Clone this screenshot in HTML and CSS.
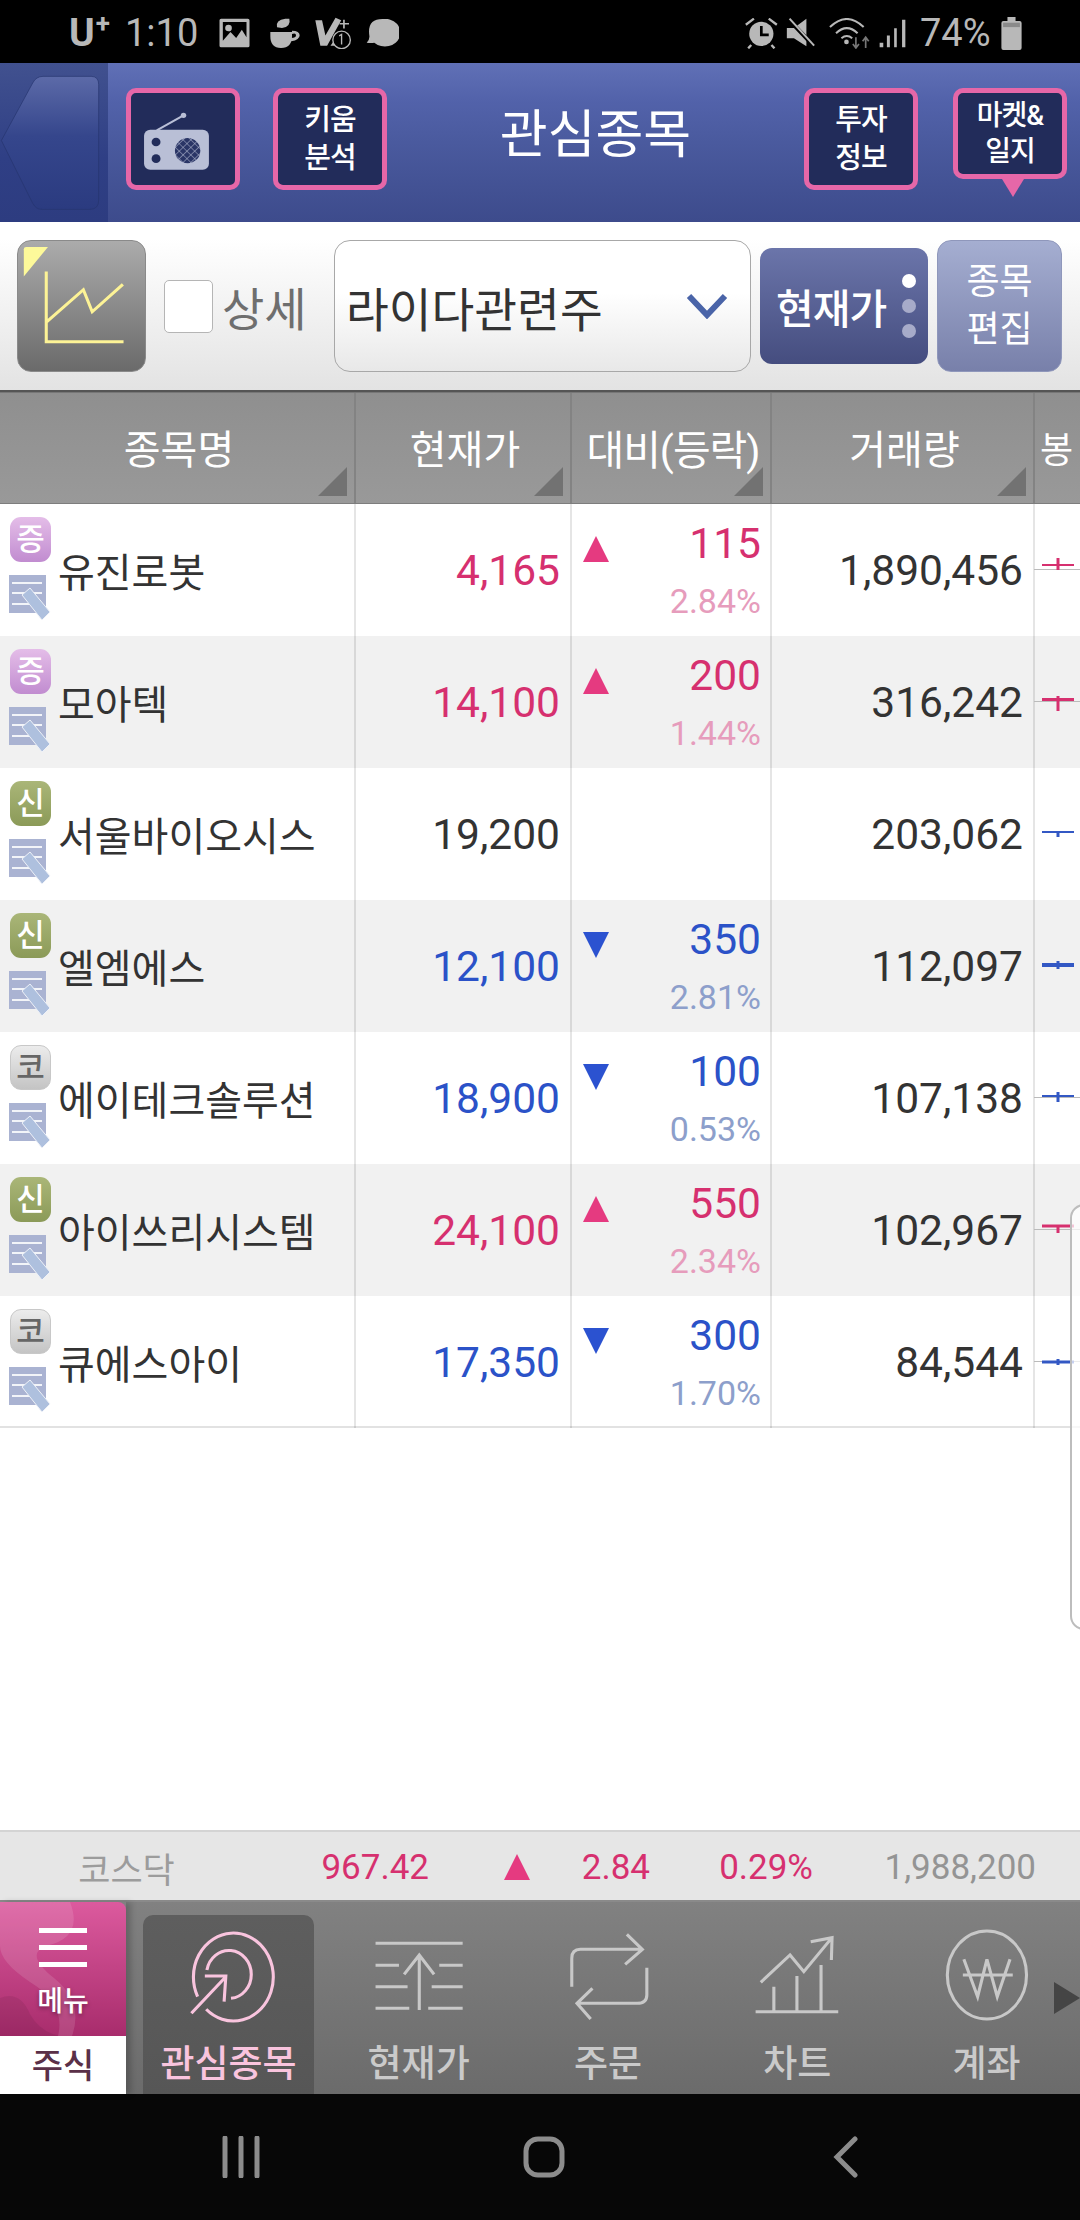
FILE: index.html
```html
<!DOCTYPE html>
<html lang="ko">
<head>
  <meta charset="UTF-8" />
  <meta name="viewport" content="width=device-width, initial-scale=1.0"/>
  <title>관심종목</title>
  <link rel="stylesheet" href="styles.css">
</head>
<body>
<svg class="defs"><symbol id="memo" viewBox="0 0 42 48"><rect width="37" height="38" fill="#aab3d2"/><path d="M3 8H33M3 18H33M3 29H33" stroke="#fff" stroke-width="2" stroke-opacity=".85"/><path d="M13 20L21 13 41 37 33 45Z" fill="#aec0de" stroke="#eef1f8"/></symbol></svg>
<div class="screen">

  <!-- status bar -->
  <div class="status">
    <div class="status-left">
      <span class="carrier">U<sup>+</sup></span>
      <span class="clock">1:10</span>
      <svg class="st-img" viewBox="635 50 90 90"><path fill="#b8b8b8" fill-rule="evenodd" d="M640 52H720Q725 52 725 57V133Q725 138 720 138H640Q635 138 635 133V57Q635 52 640 52ZM645 62V118L668 92 685 110 702 85 716 108V62ZM662 70A10 10 0 1 0 662.1 90 10 10 0 1 0 662 70Z"/></svg>
      <svg class="st-cup" viewBox="785 50 88 90"><path fill="#b8b8b8" d="M785 92H850V105Q850 140 817 140 785 140 785 105ZM805 78Q800 55 830 52L842 52Q848 75 820 80ZM850 88Q873 88 873 102T848 120V110Q862 110 862 102T850 98Z"/></svg>
      <svg class="st-lte" viewBox="915 50 108 95"><path fill="#b8b8b8" d="M915 60H935L945 105 975 52 992 60 950 135H930ZM985 100L960 135H985Z"/><path stroke="#b8b8b8" stroke-width="5" fill="none" d="M1000 58V84M987 70H1015"/><circle cx="993" cy="118" r="26" fill="#000" stroke="#b8b8b8" stroke-width="4"/><path stroke="#b8b8b8" stroke-width="4" fill="none" d="M986 106L993 102V132"/></svg>
      <svg class="st-chat" viewBox="1062 50 96 85"><path fill="#b8b8b8" d="M1110 50A47 42 0 1 1 1085 122Q1075 124 1062 122 1072 112 1070 100 1063 50 1110 50Z"/></svg>
    </div>
    <div class="status-right">
      <svg class="st-alarm" viewBox="595 48 95 92"><circle cx="642" cy="95" r="36" fill="#b8b8b8"/><path d="M642 72V98H664" stroke="#000" stroke-width="8" fill="none"/><path d="M596 68L620 50M688 68L664 50M612 128L603 138M672 128L681 138" stroke="#b8b8b8" stroke-width="7" fill="none"/></svg>
      <svg class="st-mute" viewBox="715 48 85 92"><path fill="#b8b8b8" d="M717 78H738L775 50V132L738 108H717Z"/><path d="M722 52L798 132" stroke="#000" stroke-width="12"/><path d="M725 50L798 130" stroke="#b8b8b8" stroke-width="6"/></svg>
      <svg class="st-wifi" viewBox="838 45 120 92"><path d="M840 72Q890 24 940 72M858 90Q890 60 922 90M874 105Q890 92 906 105" stroke="#b8b8b8" stroke-width="6" fill="none"/><circle cx="889" cy="116" r="7" fill="#b8b8b8"/><path d="M917 102V130M908 122L917 134 926 122M946 134V104M937 114L946 102 955 114" stroke="#777" stroke-width="5" fill="none"/></svg>
      <svg class="st-signal" viewBox="985 50 78 88"><path fill="#b8b8b8" d="M985 122H996V136H985ZM1007 100H1016V136H1007ZM1029 78H1037V136H1029ZM1053 52H1063V136H1053Z"/></svg>
      <span class="battery-text">74%</span>
      <svg class="st-batt" viewBox="1340 46 60 98"><path fill="#b8b8b8" d="M1358 46H1382V58H1394Q1400 58 1400 64V138Q1400 144 1394 144H1346Q1340 144 1340 138V64Q1340 58 1346 58H1358Z"/><path fill="#8a8a8a" d="M1345 63H1395V76H1345Z"/></svg>
    </div>
  </div>

  <!-- title bar -->
  <header class="appbar">
    <div class="back">
      <svg viewBox="0 190 314 476" preserveAspectRatio="none">
        <defs><linearGradient id="backFill" x1="0" y1="0" x2="0" y2="1"><stop offset="0" stop-color="#5c6aa8"/><stop offset=".45" stop-color="#35468c"/><stop offset="1" stop-color="#2b3b80"/></linearGradient></defs>
        <path fill="url(#backFill)" stroke="#25346e" stroke-width="2" d="M4 422L95 250Q105 230 125 230H265Q287 230 287 255V600Q287 628 262 628H120Q105 628 95 610Z"/>
      </svg>
    </div>
    <button class="head-btn radio-btn">
      <svg viewBox="380 280 303 276" preserveAspectRatio="none">
        <defs><pattern id="mesh" width="16" height="16" patternUnits="userSpaceOnUse" patternTransform="rotate(45)"><rect width="16" height="16" fill="#2a3566"/><path d="M0 0H16M0 0V16" stroke="#b9bfd6" stroke-width="3"/></pattern></defs>
        <path d="M455 392L533 347" stroke="#b9bfd6" stroke-width="6"/><circle cx="533" cy="347" r="8" fill="#b9bfd6"/>
        <rect x="418" y="390" width="189" height="120" rx="18" fill="#b9bfd6"/>
        <circle cx="453" cy="427" r="13" fill="#222c5a"/><circle cx="453" cy="477" r="13" fill="#222c5a"/>
        <ellipse cx="545" cy="453" rx="37" ry="38" fill="url(#mesh)"/>
      </svg>
    </button>
    <button class="head-btn kiwoom">키움<br>분석</button>
    <h1 class="title">관심종목</h1>
    <button class="head-btn invest">투자<br>정보</button>
    <button class="head-btn market">마켓&amp;<br>일지</button>
  </header>

  <!-- toolbar -->
  <div class="toolbar">
    <button class="chart-btn">
      <svg viewBox="50 720 373 395" preserveAspectRatio="none">
        <path fill="#fdf99a" d="M67 745Q67 738 74 738H138L67 828Z"/>
        <path d="M133 813V1026H360M135 965L242 868 268 935 358 852" stroke="#fdf396" stroke-width="9" fill="none"/>
      </svg>
    </button>
    <label class="detail"><span class="check"></span>상세</label>
    <div class="select">
      <span>라이다관련주</span>
      <svg class="chevron" viewBox="0 0 42 26"><path d="M3 3L21 22 39 3" stroke="#4a64a8" stroke-width="6" fill="none"/></svg>
    </div>
    <button class="price-btn">
      <span>현재가</span>
      <span class="dots"><i class="on"></i><i></i><i></i></span>
    </button>
    <button class="edit-btn">종목<br>편집</button>
  </div>

  <!-- watch list -->
  <div class="table">
    <div class="thead">
      <div class="th">종목명</div>
      <div class="th">현재가</div>
      <div class="th th-tight">대비(등락)</div>
      <div class="th">거래량</div>
      <div class="th th-last">봉</div>
    </div>

    <div class="row">
      <div class="cell name">
        <div class="marks">
          <span class="badge b-purple">증</span>
          <svg class="memo"><use href="#memo"/></svg>
        </div>
        <span>유진로봇</span>
      </div>
      <div class="cell price up">4,165</div>
      <div class="cell change">
        <i class="tri tri-up"></i>
        <div class="nums up"><span class="amt">115</span><span class="pct">2.84%</span></div>
      </div>
      <div class="cell vol">1,890,456</div>
      <div class="cell spark"><svg viewBox="0 0 46 132"><path d="M0 65.5H46" stroke="#bbb"/><path d="M8 61H40" stroke="#d6306f" stroke-width="2"/><path d="M24 54V66" stroke="#d6306f" stroke-width="3"/></svg></div>
    </div>

    <div class="row">
      <div class="cell name">
        <div class="marks">
          <span class="badge b-purple">증</span>
          <svg class="memo"><use href="#memo"/></svg>
        </div>
        <span>모아텍</span>
      </div>
      <div class="cell price up">14,100</div>
      <div class="cell change">
        <i class="tri tri-up"></i>
        <div class="nums up"><span class="amt">200</span><span class="pct">1.44%</span></div>
      </div>
      <div class="cell vol">316,242</div>
      <div class="cell spark"><svg viewBox="0 0 46 132"><path d="M0 65.5H46" stroke="#bbb"/><path d="M8 63.5H40" stroke="#d6306f" stroke-width="3"/><path d="M24 60V75" stroke="#d6306f" stroke-width="3"/></svg></div>
    </div>

    <div class="row">
      <div class="cell name">
        <div class="marks">
          <span class="badge b-green">신</span>
          <svg class="memo"><use href="#memo"/></svg>
        </div>
        <span>서울바이오시스</span>
      </div>
      <div class="cell price">19,200</div>
      <div class="cell change"></div>
      <div class="cell vol">203,062</div>
      <div class="cell spark"><svg viewBox="0 0 46 132"><path d="M8 64H40" stroke="#3358c4" stroke-width="2"/><path d="M24 64V69" stroke="#3358c4" stroke-width="3"/></svg></div>
    </div>

    <div class="row">
      <div class="cell name">
        <div class="marks">
          <span class="badge b-green">신</span>
          <svg class="memo"><use href="#memo"/></svg>
        </div>
        <span>엘엠에스</span>
      </div>
      <div class="cell price down">12,100</div>
      <div class="cell change">
        <i class="tri tri-down"></i>
        <div class="nums down"><span class="amt">350</span><span class="pct">2.81%</span></div>
      </div>
      <div class="cell vol">112,097</div>
      <div class="cell spark"><svg viewBox="0 0 46 132"><path d="M8 65H40" stroke="#3358c4" stroke-width="4"/><path d="M24 61V69" stroke="#3358c4" stroke-width="3"/></svg></div>
    </div>

    <div class="row">
      <div class="cell name">
        <div class="marks">
          <span class="badge b-grey">코</span>
          <svg class="memo"><use href="#memo"/></svg>
        </div>
        <span>에이테크솔루션</span>
      </div>
      <div class="cell price down">18,900</div>
      <div class="cell change">
        <i class="tri tri-down"></i>
        <div class="nums down"><span class="amt">100</span><span class="pct">0.53%</span></div>
      </div>
      <div class="cell vol">107,138</div>
      <div class="cell spark"><svg viewBox="0 0 46 132"><path d="M0 65.5H46" stroke="#bbb"/><path d="M8 64H40" stroke="#3358c4" stroke-width="2"/><path d="M24 60V70" stroke="#3358c4" stroke-width="3"/></svg></div>
    </div>

    <div class="row">
      <div class="cell name">
        <div class="marks">
          <span class="badge b-green">신</span>
          <svg class="memo"><use href="#memo"/></svg>
        </div>
        <span>아이쓰리시스템</span>
      </div>
      <div class="cell price up">24,100</div>
      <div class="cell change">
        <i class="tri tri-up"></i>
        <div class="nums up"><span class="amt">550</span><span class="pct">2.34%</span></div>
      </div>
      <div class="cell vol">102,967</div>
      <div class="cell spark"><svg viewBox="0 0 46 132"><path d="M0 65.5H46" stroke="#bbb"/><path d="M8 62H40" stroke="#d6306f" stroke-width="3"/><path d="M24 61V69" stroke="#d6306f" stroke-width="3"/></svg></div>
    </div>

    <div class="row">
      <div class="cell name">
        <div class="marks">
          <span class="badge b-grey">코</span>
          <svg class="memo"><use href="#memo"/></svg>
        </div>
        <span>큐에스아이</span>
      </div>
      <div class="cell price down">17,350</div>
      <div class="cell change">
        <i class="tri tri-down"></i>
        <div class="nums down"><span class="amt">300</span><span class="pct">1.70%</span></div>
      </div>
      <div class="cell vol">84,544</div>
      <div class="cell spark"><svg viewBox="0 0 46 132"><path d="M0 65.5H46" stroke="#bbb"/><path d="M8 66H40" stroke="#3358c4" stroke-width="3"/><path d="M24 63V69" stroke="#3358c4" stroke-width="3"/></svg></div>
    </div>

    <aside class="side-panel"></aside>
  </div>

  <!-- index ticker -->
  <div class="ticker">
    <span class="t-name">코스닥</span>
    <span class="t-num">967.42</span>
    <i class="tri tri-up t-tri"></i>
    <span class="t-num">2.84</span>
    <span class="t-num">0.29%</span>
    <span class="t-vol">1,988,200</span>
  </div>

  <!-- bottom menu -->
  <nav class="tabs">
    <div class="menu">
      <div class="menu-top">
        <svg class="menu-deco" viewBox="0 0 126 134" preserveAspectRatio="none"><path fill="#fff" fill-opacity=".12" d="M0 0H70Q84 36 46 44 24 52 54 76 84 100 72 134H58Q66 102 30 80 0 60 0 44Z"/><path fill="#000" fill-opacity=".07" d="M0 96Q20 88 30 112 40 130 60 134H0Z"/></svg>
        <span class="burger"><i></i><i></i><i></i></span>
        <span class="menu-label">메뉴</span>
      </div>
      <div class="menu-bottom">주식</div>
    </div>
    <div class="tab on">
      <svg viewBox="521 315 290.4 300" preserveAspectRatio="none"><path d="M600 568A116 132 0 1 0 575 530M602 450A65 72 0 1 1 672 535M557 580L657 470M596 468H657L652 545"/></svg>
      <span>관심종목</span>
    </div>
    <div class="tab">
      <svg viewBox="1068 315 290.4 300" preserveAspectRatio="none"><path d="M1087 370H1340M1087 436H1155M1272 436H1340M1087 500H1180M1250 500H1340M1087 565H1185M1240 565H1340M1214 570V405M1170 463L1214 405 1257 463"/></svg>
      <span>현재가</span>
    </div>
    <div class="tab">
      <svg viewBox="50 315 290.4 300" preserveAspectRatio="none"><path d="M90 500V415Q90 388 115 388H295M250 343L295 388 245 433M308 443V525Q308 550 280 550H105M150 505L105 550 145 597"/></svg>
      <span>주문</span>
    </div>
    <div class="tab">
      <svg viewBox="600 315 290.4 300" preserveAspectRatio="none"><path d="M625 575H865M678 500V575M745 468V575M815 435V575M640 487L725 405 765 455 845 355M785 365L847 353 845 420"/></svg>
      <span>차트</span>
    </div>
    <div class="tab">
      <svg viewBox="1150 315 290.4 300" preserveAspectRatio="none"><ellipse cx="1295" cy="465" rx="115" ry="132"/><path d="M1228 418L1268 530 1295 418 1325 530 1362 418M1225 465H1370"/></svg>
      <span>계좌</span>
    </div>
    <i class="tabs-more"></i>
  </nav>

  <!-- android nav -->
  <div class="sysnav">
    <svg class="nav-recent" viewBox="0 0 38 42"><path d="M3 2V40M19 2V40M35 2V40" stroke="#8c8c8c" stroke-width="5" stroke-linecap="round"/></svg>
    <svg class="nav-home" viewBox="0 0 42 42"><rect x="3" y="3" width="36" height="36" rx="12" stroke="#8c8c8c" stroke-width="5" fill="none"/></svg>
    <svg class="nav-back" viewBox="0 0 26 42"><path d="M22 3L4 21 22 39" stroke="#8c8c8c" stroke-width="5" stroke-linecap="round" fill="none"/></svg>
  </div>
</div>
</body>
</html>
```

FILE: styles.css
```css
* { box-sizing: border-box; }
html, body { margin: 0; padding: 0; }
body { font-family: Roboto, "Noto Sans CJK KR", sans-serif; color: #333; background: #fff; }
button { font-family: inherit; padding: 0; margin: 0; border: none; cursor: pointer; }
svg { display: block; }
.defs { display: none; }
.screen { width: 1080px; height: 2220px; display: flex; flex-direction: column; overflow: hidden; }

/* status bar */
.status { height: 63px; flex: none; background: #000; color: #b8b8b8; display: flex; justify-content: space-between; align-items: center; padding: 3px 58px 0 69px; font-size: 38px; }
.status-left, .status-right { display: flex; align-items: center; }
.carrier { font-weight: 700; font-size: 39px; width: 56px; line-height: 1; }
.carrier sup { font-size: 26px; line-height: 0; vertical-align: 14px; margin-left: 1px; }
.clock { width: 94px; line-height: 1; }
.st-img { width: 31px; height: 30px; }
.st-cup { width: 30px; height: 30px; margin-left: 20px; }
.st-lte { width: 37px; height: 32px; margin-left: 15px; }
.st-chat { width: 33px; height: 28px; margin-left: 14px; }
.st-alarm { width: 33px; height: 31px; }
.st-mute { width: 29px; height: 31px; margin-left: 8px; }
.st-wifi { width: 41px; height: 31px; margin-left: 14px; }
.st-signal { width: 27px; height: 29px; margin-left: 9px; }
.battery-text { margin-left: 14px; width: 81px; line-height: 1; }
.st-batt { width: 21px; height: 33px; }

/* title bar */
.appbar { height: 159px; flex: none; display: flex; align-items: flex-start; background: linear-gradient(#6070b6 0%, #5262aa 24%, #4a5a9e 50%, #3d4b8c 100%); }
.back { width: 108px; height: 159px; flex: none; background: linear-gradient(#41518f, #2f3f85 60%, #2d3c80); }
.back svg { width: 108px; height: 159px; }
.head-btn { width: 114px; height: 102px; margin-top: 25px; background: #222c5a; border: 5px solid #e667a8; border-radius: 10px; color: #fff; font-size: 29px; font-weight: 500; line-height: 38px; letter-spacing: -1px; flex: none; }
.radio-btn { margin-left: 18px; }
.radio-btn svg { width: 100%; height: 100%; }
.kiwoom { margin-left: 33px; }
.title { flex: 1; margin: 40px 0 0; text-align: center; color: #fff; font-weight: 400; font-size: 52px; line-height: 66px; }
.market { position: relative; height: 91px; margin-left: 35px; margin-right: 13px; line-height: 36px; font-size: 28px; }
.market::after { content: ""; position: absolute; left: 44px; top: 86px; width: 0; height: 0; border: 11px solid transparent; border-top: 18px solid #e667a8; border-bottom: 0; }

/* toolbar */
.toolbar { height: 170px; flex: none; display: flex; align-items: center; padding: 0 19px 0 17px; background: linear-gradient(#fff 10%, #e3e3e3 100%); border-bottom: 2px solid #555; }
.chart-btn { width: 129px; height: 132px; flex: none; border-radius: 14px; background: linear-gradient(#ababab, #6a6a6a); border: 1px solid #8a8a8a; overflow: hidden; }
.chart-btn svg { width: 100%; height: 100%; }
.detail { display: flex; align-items: center; margin-left: 18px; font-size: 46px; color: #6e6e6e; width: 170px; flex: none; }
.check { width: 49px; height: 53px; flex: none; background: #fff; border: 1px solid #b5b5b5; border-radius: 5px; margin-right: 9px; }
.select { width: 417px; height: 132px; flex: none; display: flex; align-items: center; justify-content: space-between; padding: 0 22px 0 11px; border: 1px solid #a8a8a8; border-radius: 16px; background: linear-gradient(#fff 40%, #e8e8e8); color: #333; font-size: 46.5px; }
.chevron { width: 42px; height: 26px; }
.price-btn { width: 168px; height: 116px; margin-left: 9px; flex: none; display: flex; align-items: center; justify-content: space-between; padding: 0 12px 0 16px; color: #fff; font-size: 41px; font-weight: 500; border-radius: 12px; background: linear-gradient(#6b75aa, #454d7f); letter-spacing: -1px; }
.dots { display: flex; flex-direction: column; gap: 11px; }
.dots i { display: block; width: 14px; height: 14px; border-radius: 50%; background: #a7abc9; }
.dots i.on { background: #fff; }
.edit-btn { width: 125px; height: 132px; margin-left: 9px; flex: none; border-radius: 14px; background: linear-gradient(#a5aed1, #7880aa); color: #fff; font-size: 36px; line-height: 48px; border: 1px solid #8f97bb; }

/* watch list */
.table { flex: 1; position: relative; background: #fff; }
.thead, .row { display: grid; grid-template-columns: 356px 216px 200px 263px 45px; }
.thead { height: 112px; background: linear-gradient(#8f8f8f, #999); border-top: 1px solid #777; border-bottom: 1px solid #7d7d7d; }
.th { position: relative; display: flex; align-items: center; justify-content: center; padding: 0 0 2px 4px; color: #fff; font-size: 40px; border-right: 2px solid #838383; }
.th::after { content: ""; position: absolute; right: 7px; bottom: 7px; width: 29px; height: 29px; background: #727272; clip-path: polygon(100% 0, 100% 100%, 0 100%); }
.th-tight { font-size: 41px; letter-spacing: -1px; white-space: nowrap; }
.th-last { border-right: none; white-space: nowrap; padding: 0 2px 2px 0; font-size: 36px; }
.th-last::after { display: none; }
.row { height: 132px; }
.row:nth-of-type(odd) { background: #f1f1f1; }
.row:last-of-type { border-bottom: 2px solid #e2e2e2; }
.cell { display: flex; align-items: center; justify-content: flex-end; border-right: 2px solid rgba(0, 0, 0, .1); padding-right: 9px; font-size: 42.5px; color: #333; }
.cell.up { color: #d6306f; }
.cell.down { color: #2b52c8; }
.name { justify-content: flex-start; padding: 0; font-size: 40px; }
.name > span { margin-left: 7px; }
.marks { width: 51px; height: 132px; flex: none; padding: 13px 0 0 9px; }
.badge { display: flex; align-items: center; justify-content: center; width: 41px; height: 45px; margin-left: 1px; font-size: 31px; font-weight: 500; line-height: 1; border-radius: 11px; color: #fff; }
.b-purple { background: linear-gradient(#e4bde8, #c18cd0); }
.b-green { background: linear-gradient(#aab678, #8b9a58); }
.b-grey { background: linear-gradient(#ececec, #c4c4c4); color: #666; border: 1px solid #c8c8c8; }
.memo { width: 42px; height: 48px; margin-top: 13px; }
.price { padding-right: 10px; }
.up { color: #d6306f; }
.down { color: #2b52c8; }
.change { align-items: flex-start; justify-content: space-between; }
.tri { display: block; width: 26px; height: 26px; flex: none; }
.tri-up { background: #e53a80; clip-path: polygon(50% 0, 100% 100%, 0 100%); }
.tri-down { background: #2b52d0; clip-path: polygon(0 0, 100% 0, 50% 100%); }
.change .tri { margin: 32px 0 0 11px; }
.nums { display: flex; flex-direction: column; align-items: flex-end; padding-top: 12px; }
.amt { line-height: 56px; font-size: 42.5px; }
.pct { line-height: 58px; font-size: 34px; }
.up .pct { color: #e69cbc; }
.down .pct { color: #8d9fcb; }
.vol { padding-right: 10px; }
.spark { padding: 0; border-right: none; }
.spark svg { width: 46px; height: 132px; flex: none; }
.side-panel { position: absolute; right: -20px; top: 812px; width: 30px; height: 426px; border: 2px solid #bdbdbd; border-radius: 14px; background: rgba(255, 255, 255, .72); }

/* index ticker */
.ticker { height: 72px; flex: none; display: grid; grid-template-columns: 253px 176px 101px 120px 163px 223px; align-items: center; justify-items: end; padding-top: 2px; background: #e6e6e6; border-top: 2px solid #d4d4d4; border-bottom: 2px solid #8a8a8a; font-size: 35px; }
.t-name { justify-self: center; color: #9c9c9c; font-size: 35px; }
.t-num { color: #d6306f; }
.t-tri { width: 26px; height: 26px; }
.t-vol { color: #949494; }

/* bottom menu */
.tabs { height: 192px; flex: none; position: relative; display: flex; padding-left: 135px; background: linear-gradient(#818181, #6b6b6b); }
.menu { position: absolute; left: 0; top: 0; width: 126px; height: 192px; display: flex; flex-direction: column; box-shadow: 5px 0 6px rgba(0, 0, 0, .2); }
.menu-top { position: relative; height: 134px; display: flex; flex-direction: column; align-items: center; border-top-right-radius: 8px; overflow: hidden; background: linear-gradient(#dc5a9e, #a82c6c); }
.menu-deco { position: absolute; left: 0; top: 0; width: 126px; height: 134px; }
.burger { position: relative; display: flex; flex-direction: column; gap: 12px; margin-top: 26px; }
.burger i { display: block; width: 48px; height: 5px; background: #fff; }
.menu-label { position: relative; margin-top: 17px; color: #fff; font-size: 28px; font-weight: 500; line-height: 36px; text-shadow: 0 2px 4px rgba(0, 0, 0, .35); }
.menu-bottom { height: 58px; display: flex; align-items: center; justify-content: center; padding-bottom: 3px; background: #fff; color: #5a3048; font-size: 34px; font-weight: 500; }
.tab { width: 189.3px; flex: none; display: flex; flex-direction: column; align-items: center; color: #cacaca; font-size: 37px; font-weight: 500; }
.tab svg { width: 100px; height: 100px; margin-top: 23px; flex: none; }
.tab svg * { fill: none; stroke: #c8c8c8; stroke-width: 9; }
.tab span { margin-top: 13px; line-height: 54px; white-space: nowrap; }
.tab.on { color: #f9c4de; background: linear-gradient(#5e5e5e, #565656); margin: 13px 10px 0 8px; width: 171px; border-radius: 10px 10px 0 0; }
.tab.on svg { margin-top: 10px; }
.tab.on svg * { stroke: #f9c4de; }
.tabs-more { position: absolute; left: 1054px; top: 80px; width: 26px; height: 32px; background: #454545; clip-path: polygon(0 0, 100% 50%, 0 100%); }

/* android nav */
.sysnav { height: 126px; flex: none; background: #070707; display: flex; align-items: center; padding-left: 222px; }
.nav-recent { width: 38px; height: 42px; }
.nav-home { width: 42px; height: 42px; margin-left: 263px; }
.nav-back { width: 26px; height: 42px; margin-left: 268px; }
```
